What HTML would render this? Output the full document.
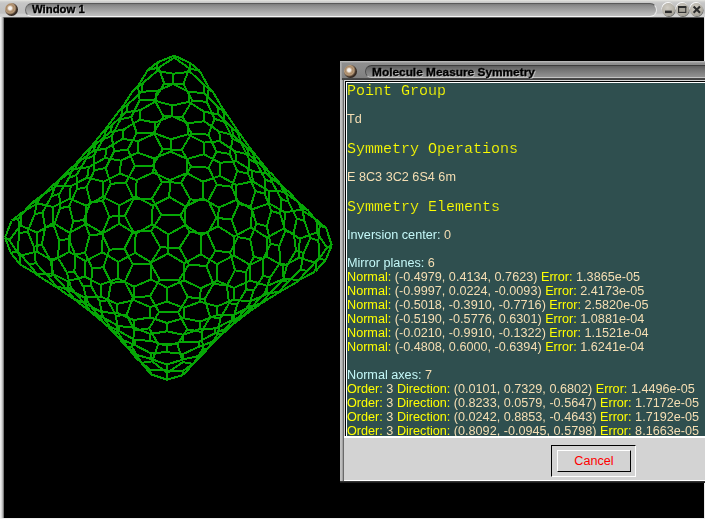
<!DOCTYPE html>
<html><head><meta charset="utf-8">
<style>
html,body{margin:0;padding:0;background:#000;}
body{width:705px;height:519px;overflow:hidden;position:relative;font-family:"Liberation Sans",sans-serif;}
#win{position:absolute;left:0;top:0;width:705px;height:519px;background:#000;overflow:hidden;}
#wtitle{position:absolute;left:0;top:0;width:705px;height:18px;background:linear-gradient(#e6e6e2 0,#d2d2d0 1.5px,#c6c6c6 3px,#c2c2c2 8px,#c0c0c0 13px,#d2d2d2 14.5px,#d4d4d4 17px,#707070 17.2px,#303030 18px);}
#wleft{position:absolute;left:0;top:17px;width:4px;height:502px;background:linear-gradient(90deg,#f4f4f4 0,#d8d8d8 1.5px,#a8a8a8 3px,#505050 4px);}
#wright{position:absolute;left:704px;top:17px;width:1px;height:502px;background:#e8e8e8;}
#wbottom{position:absolute;left:0;top:518px;width:705px;height:1px;background:#f0f0f0;}
.pill{position:absolute;border-radius:7px;box-sizing:border-box;}
#wpill{left:25px;top:3px;width:632px;height:13.5px;background:linear-gradient(#7c7c7c 0,#8e8e8e 2px,#a2a2a2 6px,#b8b8b8 10px,#c4c4c4 13px);border-top:1px solid #5a5a5a;border-left:1px solid #6c6c6c;border-bottom:1px solid #f4f4f4;border-right:1px solid #e8e8e8;}
.ttext{will-change:transform;position:absolute;font-weight:bold;color:#000;white-space:nowrap;transform-origin:0 0;font-size:10.5px;line-height:12px;-webkit-text-stroke:0.3px #000;text-shadow:1px 1px 0 rgba(255,255,255,.4);}
#wtext{left:32px;top:3.2px;transform:scaleX(1.08);will-change:transform;}
.ball{position:absolute;border-radius:50%;}
#wball{left:5px;top:2.7px;width:13px;height:13px;background:radial-gradient(circle 9px at 5.1px 5.2px,#faf8f6 0,#f2ece6 1.6px,#c0a486 2.8px,#a88866 3.8px,#b89c7c 4.8px,#8c7258 5.6px,#40332a 6.6px,#2a2018 8.2px);}
.wb{position:absolute;top:3px;width:13px;height:13px;border-radius:50%;background:radial-gradient(circle at 42% 36%,#d0ccc4 0,#b8b4aa 50%,#8c887e 100%);box-shadow:-0.5px -1px 0 rgba(255,255,255,.9),0.5px 1px 0.5px rgba(70,70,64,.7);}
#mesh{position:absolute;left:0;top:0;}
#dlg{position:absolute;left:340px;top:61px;width:380px;height:422px;background:#d3d3d3;}
#dtitle{position:absolute;left:0;top:0;width:380px;height:19px;background:linear-gradient(#c4c4c4 0,#a8a8a8 1px,#8e8e8e 2.5px,#8a8a8a 8px,#848484 14px,#808080 17px,#484848 17.3px,#404040 19px);}
#dpill{left:25px;top:4px;width:400px;height:13px;background:linear-gradient(#5e5e5e 0,#707070 3px,#868686 8px,#9a9a9a 13px);border-top:1px solid #3c3c3c;border-left:1px solid #4c4c4c;border-bottom:1px solid #c4c4c4;}
#dtext{left:32px;top:4.5px;transform:scaleX(1.13);}
#dball{left:4.3px;top:3.5px;width:13px;height:13px;background:radial-gradient(circle 9px at 5.1px 5.2px,#faf8f6 0,#f2ece6 1.6px,#c0a486 2.8px,#a88866 3.8px,#b89c7c 4.8px,#8c7258 5.6px,#40332a 6.6px,#2a2018 8.2px);}
#dleft{position:absolute;left:0;top:19px;width:4px;height:403px;background:linear-gradient(90deg,#c4c4c4 0,#b8b8b8 2px,#8c8c8c 3px,#484848 4px);}
#dleft2{position:absolute;left:0;top:1px;width:2px;height:18px;background:linear-gradient(90deg,#b4b4b4,#9c9c9c);}
#dbottom{position:absolute;left:0;top:420px;width:380px;height:2px;background:linear-gradient(#404040,#101010);}
#txt{position:absolute;left:5px;top:20px;width:375px;height:355px;background:#2f4f4f;overflow:hidden;box-sizing:border-box;border-top:1px solid #000;border-left:1px solid #000;}
#txtin{will-change:transform;position:absolute;left:0;top:0;width:376px;height:354px;box-sizing:border-box;border-top:1px solid #fff;border-left:1px solid #fff;}
#txtbot{position:absolute;left:4px;top:375px;width:376px;height:2px;background:#fff;}
#panbot{position:absolute;left:4px;top:419px;width:376px;height:1px;background:#fff;}
.l{position:absolute;left:0px;white-space:nowrap;font-size:12.65px;line-height:14px;color:#f5deb3;}
.h{position:absolute;left:0px;white-space:nowrap;font-family:"Liberation Mono",monospace;font-size:15px;line-height:17px;color:#ffff00;-webkit-text-stroke:0.2px #2f4f4f;}
.y{color:#ffff00}.b{color:#c4f8f8}
#btn{position:absolute;left:211px;top:384px;width:85px;height:32px;box-sizing:border-box;border:1px solid;border-color:#000 #fff #fff #000;}
#btnin{position:absolute;left:5px;top:4px;width:74px;height:22px;box-sizing:border-box;border:1px solid;border-color:#fff #000 #000 #fff;text-align:center;color:#ff0000;font-size:12.65px;line-height:20px;}
</style></head><body>
<div id="win">
<svg id="mesh" width="705" height="519" viewBox="0 0 705 519"><path d="M5.0 237.6L9.3 240.1M5.0 237.6L10.9 253.0M5.0 237.6L11.7 220.6M10.9 253.0L17.6 251.0M10.9 253.0L20.1 264.4M17.6 251.0L29.3 264.6M17.6 251.0L19.2 233.4M29.3 264.6L35.8 263.1M29.3 264.6L38.5 276.0M35.8 263.1L48.0 276.2M35.8 263.1L33.9 246.7M48.0 276.2L53.7 275.2M48.0 276.2L57.2 287.6M53.7 275.2L65.9 288.4M53.7 275.2L50.2 259.6M65.9 288.4L71.0 287.9M65.9 288.4L75.1 299.9M71.0 287.9L82.8 301.6M71.0 287.9L66.9 272.7M82.8 301.6L87.4 301.7M82.8 301.6L92.0 313.0M87.4 301.7L98.5 315.9M87.4 301.7L83.3 286.6M98.5 315.9L102.8 316.5M98.5 315.9L107.7 327.3M102.8 316.5L113.3 331.1M102.8 316.5L99.5 301.1M113.3 331.1L117.6 332.0M113.3 331.1L122.5 342.5M117.6 332.0L127.3 347.1M117.6 332.0L116.1 315.9M127.3 347.1L132.1 347.3M127.3 347.1L136.5 358.5M132.1 347.3L141.4 362.8M132.1 347.3L134.5 330.5M141.4 362.8L152.1 361.4M141.4 362.8L150.6 374.2M152.1 361.4L167.2 372.9M152.1 361.4L158.3 344.0M11.7 220.6L21.3 213.0M11.7 220.6L18.4 218.3M18.4 218.3L19.2 233.4M18.4 218.3L30.7 204.0M19.2 233.4L27.6 231.4M27.6 231.4L33.9 246.7M27.6 231.4L34.6 214.5M33.9 246.7L41.8 244.7M41.8 244.7L50.2 259.6M41.8 244.7L45.1 227.4M50.2 259.6L57.9 257.8M57.9 257.8L66.9 272.7M57.9 257.8L59.3 240.7M66.9 272.7L74.4 271.4M74.4 271.4L83.3 286.6M74.4 271.4L75.2 254.4M83.3 286.6L90.9 285.6M90.9 285.6L99.5 301.1M90.9 285.6L92.3 268.5M99.5 301.1L107.9 300.3M107.9 300.3L116.1 315.9M107.9 300.3L111.1 282.9M116.1 315.9L126.7 314.8M126.7 314.8L134.5 330.5M126.7 314.8L133.0 297.3M134.5 330.5L149.2 328.4M149.2 328.4L158.3 344.0M149.2 328.4L159.0 312.0M158.3 344.0L177.5 344.4M30.7 204.0L40.3 196.4M30.7 204.0L37.2 201.2M37.2 201.2L34.6 214.5M37.2 201.2L50.0 187.4M34.6 214.5L42.6 212.4M42.6 212.4L45.1 227.4M42.6 212.4L51.6 196.2M45.1 227.4L53.8 225.4M53.8 225.4L59.3 240.7M53.8 225.4L60.0 208.3M59.3 240.7L68.4 238.9M68.4 238.9L75.2 254.4M68.4 238.9L73.2 221.6M75.2 254.4L85.0 252.9M85.0 252.9L92.3 268.5M85.0 252.9L89.6 235.4M92.3 268.5L103.5 267.2M103.5 267.2L111.1 282.9M103.5 267.2L109.3 249.7M111.1 282.9L124.8 281.6M124.8 281.6L133.0 297.3M124.8 281.6L132.7 264.4M133.0 297.3L150.0 296.2M150.0 296.2L159.0 312.0M150.0 296.2L159.7 279.7M159.0 312.0L178.2 312.4M50.0 187.4L59.6 179.8M50.0 187.4L55.8 184.0M55.8 184.0L51.6 196.2M55.8 184.0L68.5 170.1M51.6 196.2L59.3 193.8M59.3 193.8L60.0 208.3M59.3 193.8L69.1 177.8M60.0 208.3L69.2 206.2M69.2 206.2L73.2 221.6M69.2 206.2L76.7 189.3M73.2 221.6L83.8 219.8M83.8 219.8L89.6 235.4M83.8 219.8L90.4 202.5M89.6 235.4L102.1 234.0M102.1 234.0L109.3 249.7M102.1 234.0L109.3 216.7M109.3 249.7L124.4 248.6M124.4 248.6L132.7 264.4M124.4 248.6L133.0 231.6M132.7 264.4L150.5 263.7M150.5 263.7L159.7 279.7M150.5 263.7L160.4 247.4M159.7 279.7L178.9 280.2M68.5 170.1L78.2 162.5M68.5 170.1L73.8 166.1M73.8 166.1L69.1 177.8M73.8 166.1L86.1 151.8M69.1 177.8L76.5 175.0M76.5 175.0L76.7 189.3M76.5 175.0L86.2 158.9M76.7 189.3L86.5 187.1M86.5 187.1L90.4 202.5M86.5 187.1L94.5 170.2M90.4 202.5L102.9 200.8M102.9 200.8L109.3 216.7M102.9 200.8L110.7 183.8M109.3 216.7L124.8 215.6M124.8 215.6L133.0 231.6M124.8 215.6L133.7 198.9M133.0 231.6L151.1 231.2M151.1 231.2L160.4 247.4M151.1 231.2L161.2 214.9M160.4 247.4L179.6 247.8M86.1 151.8L95.8 144.2M86.1 151.8L90.8 147.2M90.8 147.2L86.2 158.9M90.8 147.2L102.6 132.4M86.2 158.9L93.8 155.7M93.8 155.7L94.5 170.2M93.8 155.7L103.1 139.3M94.5 170.2L105.7 168.0M105.7 168.0L110.7 183.8M105.7 168.0L114.1 151.2M110.7 183.8L125.9 182.6M125.9 182.6L133.7 198.9M125.9 182.6L134.9 166.0M133.7 198.9L151.9 198.5M151.9 198.5L161.2 214.9M151.9 198.5L161.9 182.2M161.2 214.9L180.3 215.4M102.6 132.4L112.3 124.8M102.6 132.4L107.0 127.2M107.0 127.2L103.1 139.3M107.0 127.2L118.2 111.9M103.1 139.3L111.6 136.0M111.6 136.0L114.1 151.2M111.6 136.0L120.6 119.4M114.1 151.2L127.8 149.6M127.8 149.6L134.9 166.0M127.8 149.6L136.7 133.0M134.9 166.0L152.7 165.7M152.7 165.7L161.9 182.2M152.7 165.7L162.7 149.3M161.9 182.2L181.1 182.7M118.2 111.9L127.8 104.4M118.2 111.9L122.7 106.6M122.7 106.6L120.6 119.4M122.7 106.6L133.1 90.7M120.6 119.4L131.2 116.9M131.2 116.9L136.7 133.0M131.2 116.9L139.7 100.2M136.7 133.0L153.7 132.7M153.7 132.7L162.7 149.3M153.7 132.7L163.4 116.3M162.7 149.3L181.8 149.8M133.1 90.7L142.7 83.2M133.1 90.7L138.0 86.0M138.0 86.0L139.7 100.2M138.0 86.0L148.0 69.8M139.7 100.2L154.4 99.7M154.4 99.7L163.4 116.3M154.4 99.7L164.2 83.5M163.4 116.3L182.6 116.7M148.0 69.8L157.6 62.3M148.0 69.8L158.7 67.7M158.7 67.7L164.2 83.5M158.7 67.7L174.3 57.6M164.2 83.5L183.3 83.9M182.8 362.1L167.2 372.9M182.8 362.1L193.2 364.0M182.8 362.1L177.5 344.4M193.2 364.0L203.0 349.0M193.2 364.0L183.3 375.0M203.0 349.0L207.6 348.9M203.0 349.0L201.6 332.0M207.6 348.9L217.8 334.3M207.6 348.9L197.6 359.9M217.8 334.3L221.9 333.7M217.8 334.3L220.3 318.4M221.9 333.7L233.0 319.5M221.9 333.7L212.0 344.6M233.0 319.5L237.0 319.1M233.0 319.5L237.2 304.3M237.0 319.1L248.7 305.5M237.0 319.1L227.0 330.1M248.7 305.5L253.0 305.6M248.7 305.5L253.6 290.6M253.0 305.6L265.2 292.5M253.0 305.6L243.0 316.6M265.2 292.5L270.0 293.2M265.2 292.5L270.2 277.5M270.0 293.2L282.7 280.6M270.0 293.2L260.1 304.2M282.7 280.6L288.1 281.8M282.7 280.6L287.1 265.2M288.1 281.8L300.8 269.3M288.1 281.8L278.1 292.8M300.8 269.3L306.9 271.1M300.8 269.3L303.6 253.0M306.9 271.1L319.1 258.1M306.9 271.1L296.9 282.1M319.1 258.1L325.4 260.4M319.1 258.1L318.4 240.5M325.4 260.4L331.8 245.3M325.4 260.4L315.4 271.4M331.8 245.3L327.1 247.6M331.8 245.3L326.1 228.0M177.5 344.4L187.2 329.3M187.2 329.3L201.6 332.0M187.2 329.3L178.2 312.4M201.6 332.0L210.0 316.8M210.0 316.8L220.3 318.4M210.0 316.8L204.7 299.0M220.3 318.4L229.0 303.2M229.0 303.2L237.2 304.3M229.0 303.2L226.9 285.6M237.2 304.3L246.4 289.3M246.4 289.3L253.6 290.6M246.4 289.3L245.9 272.1M253.6 290.6L263.1 275.9M263.1 275.9L270.2 277.5M263.1 275.9L263.2 258.8M270.2 277.5L279.8 263.1M279.8 263.1L287.1 265.2M279.8 263.1L279.4 245.9M287.1 265.2L296.0 250.7M296.0 250.7L303.6 253.0M296.0 250.7L293.7 233.2M303.6 253.0L310.4 238.1M310.4 238.1L318.4 240.5M310.4 238.1L304.4 220.9M318.4 240.5L319.8 225.4M319.8 225.4L326.1 228.0M319.8 225.4L308.2 210.5M326.1 228.0L316.6 220.0M178.2 312.4L187.8 297.1M187.8 297.1L204.7 299.0M187.8 297.1L178.9 280.2M204.7 299.0L213.4 283.7M213.4 283.7L226.9 285.6M213.4 283.7L206.4 266.1M226.9 285.6L235.0 270.3M235.0 270.3L245.9 272.1M235.0 270.3L230.2 252.6M245.9 272.1L253.8 256.8M253.8 256.8L263.2 258.8M253.8 256.8L250.1 239.2M263.2 258.8L270.6 243.7M270.6 243.7L279.4 245.9M270.6 243.7L266.8 226.1M279.4 245.9L285.4 230.9M285.4 230.9L293.7 233.2M285.4 230.9L280.1 213.5M293.7 233.2L296.8 218.4M296.8 218.4L304.4 220.9M296.8 218.4L288.5 201.8M304.4 220.9L302.2 207.4M302.2 207.4L308.2 210.5M302.2 207.4L290.1 193.0M308.2 210.5L298.7 202.5M178.9 280.2L188.8 264.6M188.8 264.6L206.4 266.1M188.8 264.6L179.6 247.8M206.4 266.1L215.3 250.7M215.3 250.7L230.2 252.6M215.3 250.7L207.6 233.4M230.2 252.6L237.9 237.2M237.9 237.2L250.1 239.2M237.9 237.2L231.7 219.6M250.1 239.2L256.5 223.8M256.5 223.8L266.8 226.1M256.5 223.8L250.8 206.3M266.8 226.1L271.3 211.0M271.3 211.0L280.1 213.5M271.3 211.0L264.7 193.7M280.1 213.5L281.3 199.1M281.3 199.1L288.5 201.8M281.3 199.1L272.3 182.6M288.5 201.8L284.8 189.4M284.8 189.4L290.1 193.0M284.8 189.4L272.7 174.9M290.1 193.0L280.6 185.0M179.6 247.8L189.6 232.1M189.6 232.1L207.6 233.4M189.6 232.1L180.3 215.4M207.6 233.4L216.4 217.8M216.4 217.8L231.7 219.6M216.4 217.8L208.3 200.6M231.7 219.6L238.7 204.0M238.7 204.0L250.8 206.3M238.7 204.0L231.7 186.7M250.8 206.3L255.3 191.0M255.3 191.0L264.7 193.7M255.3 191.0L248.1 173.8M264.7 193.7L265.3 179.5M265.3 179.5L272.3 182.6M265.3 179.5L256.4 162.9M272.3 182.6L268.0 170.7M268.0 170.7L272.7 174.9M268.0 170.7L256.3 155.8M272.7 174.9L263.2 166.9M180.3 215.4L190.3 199.4M190.3 199.4L208.3 200.6M190.3 199.4L181.1 182.7M208.3 200.6L216.8 184.8M216.8 184.8L231.7 186.7M216.8 184.8L208.7 167.7M231.7 186.7L237.3 171.1M237.3 171.1L248.1 173.8M237.3 171.1L229.8 153.9M248.1 173.8L249.3 159.3M249.3 159.3L256.4 162.9M249.3 159.3L240.8 142.5M256.4 162.9L252.1 151.0M252.1 151.0L256.3 155.8M252.1 151.0L241.1 135.6M256.3 155.8L246.8 147.8M181.1 182.7L191.0 166.6M191.0 166.6L208.7 167.7M191.0 166.6L181.8 149.8M208.7 167.7L216.4 151.7M216.4 151.7L229.8 153.9M216.4 151.7L208.4 134.7M229.8 153.9L232.7 138.9M232.7 138.9L240.8 142.5M232.7 138.9L224.7 121.9M240.8 142.5L237.2 130.3M237.2 130.3L241.1 135.6M237.2 130.3L226.9 114.5M241.1 135.6L231.6 127.6M181.8 149.8L191.5 133.5M191.5 133.5L208.4 134.7M191.5 133.5L182.6 116.7M208.4 134.7L214.5 118.9M214.5 118.9L224.7 121.9M214.5 118.9L206.8 101.8M224.7 121.9L222.9 108.9M222.9 108.9L226.9 114.5M222.9 108.9L213.3 92.6M226.9 114.5L217.4 106.5M182.6 116.7L192.3 100.6M192.3 100.6L206.8 101.8M192.3 100.6L183.3 83.9M206.8 101.8L208.9 87.7M208.9 87.7L213.3 92.6M208.9 87.7L199.8 71.0M213.3 92.6L203.8 84.6M183.3 83.9L189.4 68.4M189.4 68.4L199.8 71.0M189.4 68.4L174.3 57.6M199.8 71.0L190.3 63.0M316.6 232.5L327.1 247.6M316.6 232.5L299.6 238.7M316.6 232.5L316.6 220.0M299.6 238.7L283.9 228.4M299.6 238.7L299.2 257.7M283.9 228.4L267.0 237.6M283.9 228.4L285.1 212.5M267.0 237.6L251.0 227.4M267.0 237.6L266.6 256.6M251.0 227.4L234.1 236.4M251.0 227.4L251.9 209.5M234.1 236.4L218.0 226.2M234.1 236.4L233.7 255.4M218.0 226.2L201.3 235.3M218.0 226.2L218.7 207.6M201.3 235.3L185.1 225.1M201.3 235.3L200.8 254.3M185.1 225.1L168.4 234.5M185.1 225.1L185.6 206.4M168.4 234.5L152.2 224.3M168.4 234.5L168.0 253.5M152.2 224.3L135.6 233.8M152.2 224.3L152.6 205.6M135.6 233.8L119.2 223.8M135.6 233.8L135.1 252.8M119.2 223.8L102.7 233.3M119.2 223.8L119.5 205.3M102.7 233.3L86.2 223.6M102.7 233.3L102.2 252.3M86.2 223.6L69.7 232.9M86.2 223.6L86.3 205.6M69.7 232.9L53.3 223.0M69.7 232.9L69.3 251.9M53.3 223.0L37.0 232.6M53.3 223.0L53.0 207.0M37.0 232.6L20.5 225.5M37.0 232.6L36.6 251.5M20.5 225.5L9.3 240.1M20.5 225.5L21.3 213.0M316.6 220.0L300.9 209.5M300.9 209.5L285.1 212.5M300.9 209.5L298.7 202.5M285.1 212.5L269.0 203.3M269.0 203.3L251.9 209.5M269.0 203.3L268.8 190.9M251.9 209.5L235.9 200.1M235.9 200.1L218.7 207.6M235.9 200.1L236.2 184.9M218.7 207.6L202.6 198.1M202.6 198.1L185.6 206.4M202.6 198.1L203.0 181.7M185.6 206.4L169.4 197.0M169.4 197.0L152.6 205.6M169.4 197.0L169.8 180.2M152.6 205.6L136.1 196.5M136.1 196.5L119.5 205.3M136.1 196.5L136.6 180.1M119.5 205.3L102.8 196.9M102.8 196.9L86.3 205.6M102.8 196.9L103.4 181.7M86.3 205.6L69.6 198.6M69.6 198.6L53.0 207.0M69.6 198.6L70.7 186.2M53.0 207.0L37.5 203.3M37.5 203.3L21.3 213.0M37.5 203.3L40.3 196.4M298.7 202.5L283.4 191.6M283.4 191.6L268.8 190.9M283.4 191.6L280.6 185.0M268.8 190.9L252.8 181.4M252.8 181.4L236.2 184.9M252.8 181.4L251.9 170.9M236.2 184.9L220.0 175.9M220.0 175.9L203.0 181.7M220.0 175.9L220.0 162.9M203.0 181.7L186.8 173.1M186.8 173.1L169.8 180.2M186.8 173.1L187.1 159.0M169.8 180.2L153.4 172.4M153.4 172.4L136.6 180.1M153.4 172.4L153.9 158.3M136.6 180.1L120.0 173.5M120.0 173.5L103.4 181.7M120.0 173.5L120.9 160.6M103.4 181.7L87.2 177.5M87.2 177.5L70.7 186.2M87.2 177.5L88.8 167.1M70.7 186.2L56.2 186.3M56.2 186.3L40.3 196.4M56.2 186.3L59.6 179.8M280.6 185.0L265.8 173.4M265.8 173.4L251.9 170.9M265.8 173.4L263.2 166.9M251.9 170.9L236.1 161.0M236.1 161.0L220.0 162.9M236.1 161.0L235.3 151.5M220.0 162.9L203.9 154.2M203.9 154.2L187.1 159.0M203.9 154.2L203.9 142.6M187.1 159.0L170.7 151.6M170.7 151.6L153.9 158.3M170.7 151.6L171.1 139.2M153.9 158.3L137.5 152.7M137.5 152.7L120.9 160.6M137.5 152.7L138.3 141.0M120.9 160.6L105.1 158.0M105.1 158.0L88.8 167.1M105.1 158.0L106.6 148.4M88.8 167.1L75.0 168.9M75.0 168.9L59.6 179.8M75.0 168.9L78.2 162.5M263.2 166.9L248.9 154.6M248.9 154.6L235.3 151.5M248.9 154.6L246.8 147.8M235.3 151.5L219.8 141.2M219.8 141.2L203.9 142.6M219.8 141.2L219.4 131.7M203.9 142.6L187.8 134.3M187.8 134.3L171.1 139.2M187.8 134.3L188.1 123.2M171.1 139.2L154.9 133.5M154.9 133.5L138.3 141.0M154.9 133.5L155.4 122.5M138.3 141.0L122.6 138.9M122.6 138.9L106.6 148.4M122.6 138.9L123.7 129.5M106.6 148.4L93.1 150.9M93.1 150.9L78.2 162.5M93.1 150.9L95.8 144.2M246.8 147.8L233.0 134.9M233.0 134.9L219.4 131.7M233.0 134.9L231.6 127.6M219.4 131.7L204.1 121.3M204.1 121.3L188.1 123.2M204.1 121.3L204.2 111.7M188.1 123.2L171.9 116.1M171.9 116.1L155.4 122.5M171.9 116.1L172.3 105.5M155.4 122.5L139.6 119.8M139.6 119.8L123.7 129.5M139.6 119.8L140.3 110.2M123.7 129.5L110.2 132.0M110.2 132.0L95.8 144.2M110.2 132.0L112.3 124.8M231.6 127.6L218.2 114.3M218.2 114.3L204.2 111.7M218.2 114.3L217.4 106.5M204.2 111.7L188.7 101.9M188.7 101.9L172.3 105.5M188.7 101.9L189.1 91.9M172.3 105.5L156.2 101.1M156.2 101.1L140.3 110.2M156.2 101.1L156.6 91.1M140.3 110.2L126.3 112.2M126.3 112.2L112.3 124.8M126.3 112.2L127.8 104.4M217.4 106.5L204.1 93.1M204.1 93.1L189.1 91.9M204.1 93.1L203.8 84.6M189.1 91.9L173.1 84.1M173.1 84.1L156.6 91.1M173.1 84.1L173.5 73.7M156.6 91.1L141.7 91.7M141.7 91.7L127.8 104.4M141.7 91.7L142.7 83.2M203.8 84.6L190.1 71.8M190.1 71.8L173.5 73.7M190.1 71.8L190.3 63.0M173.5 73.7L157.1 71.0M157.1 71.0L142.7 83.2M157.1 71.0L157.6 62.3M190.3 63.0L174.2 55.6M174.2 55.6L157.6 62.3M174.2 55.6L174.3 57.6M19.8 255.9L9.3 240.1M19.8 255.9L36.6 251.5M19.8 255.9L20.1 264.4M36.6 251.5L52.5 260.7M52.5 260.7L69.3 251.9M52.5 260.7L51.5 273.5M69.3 251.9L85.3 261.1M85.3 261.1L102.2 252.3M85.3 261.1L84.7 276.7M102.2 252.3L118.4 261.8M118.4 261.8L135.1 252.8M118.4 261.8L117.9 278.5M135.1 252.8L151.3 262.5M151.3 262.5L168.0 253.5M151.3 262.5L151.0 279.5M168.0 253.5L184.3 263.2M184.3 263.2L200.8 254.3M184.3 263.2L184.0 280.3M200.8 254.3L217.2 264.1M217.2 264.1L233.7 255.4M217.2 264.1L217.1 280.8M233.7 255.4L250.2 264.9M250.2 264.9L266.6 256.6M250.2 264.9L250.3 280.6M266.6 256.6L283.0 266.1M283.0 266.1L299.2 257.7M283.0 266.1L283.6 279.0M299.2 257.7L315.9 262.9M315.9 262.9L327.1 247.6M315.9 262.9L315.4 271.4M20.1 264.4L35.9 273.7M35.9 273.7L51.5 273.5M35.9 273.7L38.5 276.0M51.5 273.5L67.7 281.2M67.7 281.2L84.7 276.7M67.7 281.2L68.3 289.5M84.7 276.7L100.8 284.8M100.8 284.8L117.9 278.5M100.8 284.8L100.8 296.6M117.9 278.5L134.1 286.7M134.1 286.7L151.0 279.5M134.1 286.7L133.9 300.1M151.0 279.5L167.3 287.8M167.3 287.8L184.0 280.3M167.3 287.8L167.1 301.6M184.0 280.3L200.6 288.3M200.6 288.3L217.1 280.8M200.6 288.3L200.3 301.7M217.1 280.8L233.9 287.9M233.9 287.9L250.3 280.6M233.9 287.9L233.6 299.7M250.3 280.6L267.2 285.9M267.2 285.9L283.6 279.0M267.2 285.9L266.4 294.2M283.6 279.0L299.4 279.9M299.4 279.9L315.4 271.4M299.4 279.9L296.9 282.1M38.5 276.0L53.9 285.7M53.9 285.7L68.3 289.5M53.9 285.7L57.2 287.6M68.3 289.5L84.5 297.6M84.5 297.6L100.8 296.6M84.5 297.6L85.7 303.7M100.8 296.6L117.1 304.0M117.1 304.0L133.9 300.1M117.1 304.0L117.5 313.0M133.9 300.1L150.3 307.1M150.3 307.1L167.1 301.6M150.3 307.1L150.3 317.4M167.1 301.6L183.7 307.8M183.7 307.8L200.3 301.7M183.7 307.8L183.5 318.2M200.3 301.7L217.1 306.4M217.1 306.4L233.6 299.7M217.1 306.4L216.6 315.3M233.6 299.7L250.0 301.5M250.0 301.5L266.4 294.2M250.0 301.5L248.8 307.5M266.4 294.2L281.2 291.0M281.2 291.0L296.9 282.1M281.2 291.0L278.1 292.8M57.2 287.6L72.1 298.0M72.1 298.0L85.7 303.7M72.1 298.0L75.1 299.9M85.7 303.7L101.6 312.2M101.6 312.2L117.5 313.0M101.6 312.2L102.8 317.3M117.5 313.0L133.8 320.1M133.8 320.1L150.3 317.4M133.8 320.1L134.1 327.5M150.3 317.4L166.9 323.0M166.9 323.0L183.5 318.2M166.9 323.0L166.8 331.3M183.5 318.2L200.1 321.6M200.1 321.6L216.6 315.3M200.1 321.6L199.7 329.1M216.6 315.3L232.6 315.3M232.6 315.3L248.8 307.5M232.6 315.3L231.5 320.3M248.8 307.5L262.9 302.5M262.9 302.5L278.1 292.8M262.9 302.5L260.1 304.2M75.1 299.9L89.5 310.9M89.5 310.9L102.8 317.3M89.5 310.9L92.0 313.0M102.8 317.3L118.4 326.1M118.4 326.1L134.1 327.5M118.4 326.1L119.2 331.1M134.1 327.5L150.3 334.0M150.3 334.0L166.8 331.3M150.3 334.0L150.4 340.8M166.8 331.3L183.3 334.8M183.3 334.8L199.7 329.1M183.3 334.8L183.2 341.5M199.7 329.1L215.6 328.4M215.6 328.4L231.5 320.3M215.6 328.4L214.9 333.3M231.5 320.3L245.3 314.6M245.3 314.6L260.1 304.2M245.3 314.6L243.0 316.6M92.0 313.0L105.9 324.7M105.9 324.7L119.2 331.1M105.9 324.7L107.7 327.3M119.2 331.1L134.6 340.0M134.6 340.0L150.4 340.8M134.6 340.0L135.0 345.1M150.4 340.8L166.8 345.8M166.8 345.8L183.2 341.5M166.8 345.8L166.8 352.1M183.2 341.5L199.2 341.5M199.2 341.5L214.9 333.3M199.2 341.5L198.9 346.7M214.9 333.3L228.7 327.6M228.7 327.6L243.0 316.6M228.7 327.6L227.0 330.1M107.7 327.3L121.2 339.3M121.2 339.3L135.0 345.1M121.2 339.3L122.5 342.5M135.0 345.1L150.6 353.2M150.6 353.2L166.8 352.1M150.6 353.2L150.6 358.8M166.8 352.1L183.1 354.0M183.1 354.0L198.9 346.7M183.1 354.0L183.0 359.5M198.9 346.7L213.1 341.5M213.1 341.5L227.0 330.1M213.1 341.5L212.0 344.6M122.5 342.5L135.8 354.6M135.8 354.6L150.6 358.8M135.8 354.6L136.5 358.5M150.6 358.8L166.8 364.6M166.8 364.6L183.0 359.5M166.8 364.6L166.8 370.5M183.0 359.5L198.2 356.0M198.2 356.0L212.0 344.6M198.2 356.0L197.6 359.9M136.5 358.5L150.4 370.0M150.4 370.0L166.8 370.5M150.4 370.0L150.6 374.2M166.8 370.5L183.3 370.8M183.3 370.8L197.6 359.9M183.3 370.8L183.3 375.0M150.6 374.2L166.9 379.7M166.9 379.7L183.3 375.0M166.9 379.7L167.2 372.9" fill="none" stroke="#06a606" stroke-width="2" stroke-linecap="butt" shape-rendering="crispEdges"/></svg>
<div id="wtitle"></div>
<div id="wleft"></div><div id="wright"></div><div id="wbottom"></div>
<div class="pill" id="wpill"></div>
<div class="ball" id="wball"></div>
<div class="ttext" id="wtext">Window 1</div>
<div class="wb" style="left:662px"></div><div class="wb" style="left:676.3px"></div><div class="wb" style="left:690.3px"></div>
<svg style="position:absolute;left:655px;top:0" width="50" height="20" viewBox="655 0 50 20"><rect x="665" y="10.6" width="6.8" height="2.5" fill="#2c2c2c"/><rect x="678.6" y="7.2" width="7.2" height="5.2" fill="#aaa69c" stroke="#2c2c2c" stroke-width="1.1"/><rect x="678" y="6" width="8.3" height="2" fill="#2c2c2c"/><path d="M693.6 6.4L700 12.8M700 6.4L693.6 12.8" stroke="#2c2c2c" stroke-width="2.1" fill="none"/></svg>
<div id="dlg">
 <div id="dtitle"></div>
 <div class="pill" id="dpill"></div>
 <div class="ball" id="dball"></div>
 <div class="ttext" id="dtext">Molecule Measure Symmetry</div>
 <div id="dleft"></div><div id="dleft2"></div>
 <div id="txt"><div id="txtin">
  <div class="h" style="top:-0.5px">Point Group</div>
  <div class="l" style="top:28.67px">Td</div>
  <div class="h" style="top:57.5px">Symmetry Operations</div>
  <div class="l" style="top:86.67px">E 8C3 3C2 6S4 6m</div>
  <div class="h" style="top:115.5px">Symmetry Elements</div>
  <div class="l b" style="top:144.67px">Inversion center: <span style="color:#f5deb3">0</span></div>
  <div class="l b" style="top:172.67px">Mirror planes: <span style="color:#f5deb3">6</span></div>
  <div class="l" style="top:186.67px"><span class="y">Normal:</span> (-0.4979, 0.4134, 0.7623) <span class="y">Error:</span> 1.3865e-05</div>
  <div class="l" style="top:200.67px"><span class="y">Normal:</span> (-0.9997, 0.0224, -0.0093) <span class="y">Error:</span> 2.4173e-05</div>
  <div class="l" style="top:214.67px"><span class="y">Normal:</span> (-0.5018, -0.3910, -0.7716) <span class="y">Error:</span> 2.5820e-05</div>
  <div class="l" style="top:228.67px"><span class="y">Normal:</span> (-0.5190, -0.5776, 0.6301) <span class="y">Error:</span> 1.0881e-04</div>
  <div class="l" style="top:242.67px"><span class="y">Normal:</span> (-0.0210, -0.9910, -0.1322) <span class="y">Error:</span> 1.1521e-04</div>
  <div class="l" style="top:256.67px"><span class="y">Normal:</span> (-0.4808, 0.6000, -0.6394) <span class="y">Error:</span> 1.6241e-04</div>
  <div class="l b" style="top:284.67px">Normal axes: <span style="color:#f5deb3">7</span></div>
  <div class="l" style="top:298.67px"><span class="y">Order:</span> 3 <span class="y">Direction:</span> (0.0101, 0.7329, 0.6802) <span class="y">Error:</span> 1.4496e-05</div>
  <div class="l" style="top:312.67px"><span class="y">Order:</span> 3 <span class="y">Direction:</span> (0.8233, 0.0579, -0.5647) <span class="y">Error:</span> 1.7172e-05</div>
  <div class="l" style="top:326.67px"><span class="y">Order:</span> 3 <span class="y">Direction:</span> (0.0242, 0.8853, -0.4643) <span class="y">Error:</span> 1.7192e-05</div>
  <div class="l" style="top:340.67px"><span class="y">Order:</span> 3 <span class="y">Direction:</span> (0.8092, -0.0945, 0.5798) <span class="y">Error:</span> 8.1663e-05</div>
 </div></div>
 <div id="txtbot"></div>
 <div id="btn"><div id="btnin">Cancel</div></div>
 <div id="panbot"></div>
 <div id="dbottom"></div>
</div>
</div>
</body></html>
